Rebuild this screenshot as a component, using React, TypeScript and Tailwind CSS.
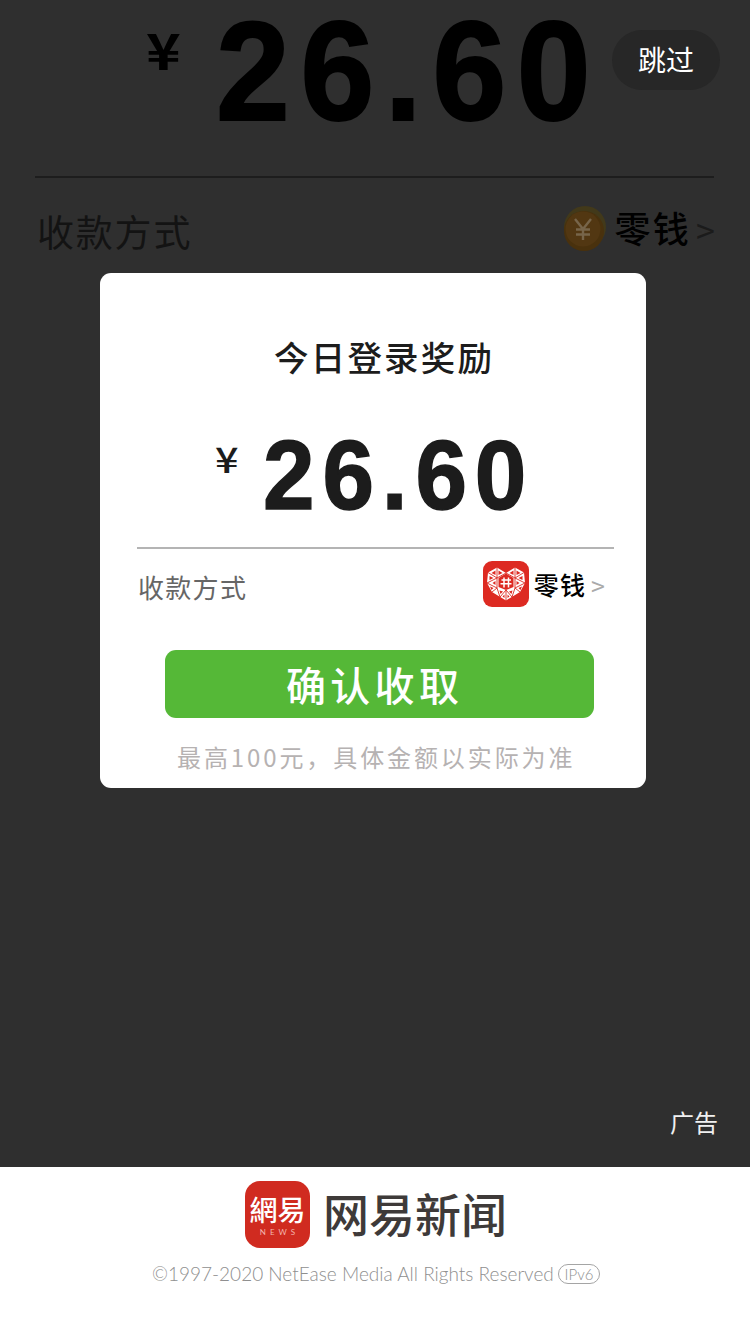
type rowProps = {
  big?: boolean;
};

const cjk = "font-['Noto_Sans_CJK_SC',sans-serif]";

const Coin = () => (
  <svg className="w-[44px] h-[48px]" viewBox="0 0 44 48">
    <circle cx="23" cy="22" r="21" fill="#42391a" />
    <circle cx="22" cy="26" r="20" fill="#49310d" />
    <circle cx="21" cy="24" r="17.5" fill="#523712" />
    <path
      d="M13 14L21 24L29 14M21 24V35M14 24.500H28M14 29.500H28"
      fill="none"
      stroke="#77654a"
      strokeWidth="2.4"
    />
  </svg>
);

const Heart = () => (
  <svg className="w-[46px] h-[46px]" viewBox="0 0 46 46">
    <rect width="46" height="46" rx="9" fill="#dd2a22" />
    <path
      d="M14 6.500L23 12L32 6.500L41 11.500L42 22L37 31L23 39.500L9 31L4 22L5 11.500Z"
      fill="#fff"
    />
    {/* gaps between the tiles */}
    <g fill="none" stroke="#dd2a22" strokeWidth="0.9">
      <path d="M14 6V17M5 11.500L14 17L23 12L32 17L41 11.500M32 6V17" />
      <path d="M14 17L4 22L14 27M32 17L42 22L32 27M14 17V27M32 17V27" />
      <path d="M14 27L9 31M32 27L37 31M14 27L17 36L23 29L29 36L32 27M23 29V40" />
    </g>
    <g fill="#dd2a22">
      <path d="M8.500 12L12.500 9.500V14ZM15.500 9.500L19.500 12L15.500 14ZM30.500 9.500L26.500 12L30.500 14ZM37.500 12L33.500 9.500V14Z" />
      <path d="M6.500 15L10.500 17L6.500 19ZM39.500 15L35.500 17L39.500 19ZM9.500 22L12.500 20V24ZM36.500 22L33.500 20V24Z" />
      <path d="M7 25.500L10.500 27L8.500 29ZM39 25.500L35.500 27L37.500 29ZM16.500 29.500L20 30.500L17.500 33ZM29.500 29.500L26 30.500L28.500 33Z" />
      <path d="M21.500 33.500V37L19.500 35.500ZM24.500 33.500V37L26.500 35.500Z" />
      <path d="M15.500 17L23 12.500L30.500 17V26L23 29L15.500 26Z" />
    </g>
    <path
      d="M18.500 19H28M17.500 22.800H28.500M21 16.500V26.500M25.500 16.500V26.500"
      fill="none"
      stroke="#fff"
      strokeWidth="1.500"
    />
  </svg>
);

const Amount = ({ big }: rowProps) => (
  <div
    className={`flex items-start whitespace-nowrap ${
      big ? "text-black" : "text-[#1c1c1c]"
    }`}
  >
    <span
      className={`${cjk} origin-left scale-x-[1.18] ${
        big
          ? "w-[70px] mt-[22px] text-[50px] leading-[52px] font-bold"
          : "w-[48px] mt-[17px] text-[35px] leading-[32px] font-medium"
      }`}
    >
      ¥
    </span>
    <span
      className={`font-['Liberation_Sans',Arial,sans-serif] font-bold origin-left scale-x-[0.94] ${
        big
          ? "mb-[2px] text-[141px] leading-[142px] tracking-[11.4px] [-webkit-text-stroke:2px_#000]"
          : "text-[98.5px] leading-[100px] tracking-[8.4px] [-webkit-text-stroke:1.5px_#1c1c1c]"
      }`}
    >
      26.60
    </span>
  </div>
);

const Background = () => (
  <div className="h-full bg-[#2f2f2f]">
    <div className="pl-[146px]">
      <Amount big />
    </div>
    <div className="mt-[32px] ml-[35px] w-[679px] h-[2px] bg-[#1d1d1d]" />
    <div className="flex justify-between pl-[37px] pr-[34px]">
      <span className="mt-[33px] text-[37px] leading-[40px] tracking-[1.800px] text-[#131313]">
        收款方式
      </span>
      <div className="flex pt-[27px]">
        <Coin />
        <span className="ml-[8px] mt-[2px] text-[36px] leading-[40px] tracking-[2.300px] font-medium text-black">
          零钱
        </span>
        <span className="ml-[5px] mt-[5px] w-[20px] text-[34px] leading-[40px] text-[#1b1b1b]">
          &gt;
        </span>
      </div>
    </div>
  </div>
);

const Reward = () => (
  <div className="mt-[273px] ml-[100px] w-[546px] h-[515px] bg-white rounded-[11px] overflow-hidden">
    <h1 className="pt-[63px] pl-[174px] text-[34.5px] leading-[40px] tracking-[2.200px] font-medium text-[#1c1c1c]">
      今日登录奖励
    </h1>
    <div className="mt-[49px] ml-[115px]">
      <Amount />
    </div>
    <div className="mt-[22px] ml-[37px] w-[477px] h-[2px] bg-[#b4b4b4]" />
    <div className="flex items-start justify-between h-[101px] pl-[38px] pr-[41px]">
      <span className="mt-[23px] text-[26px] leading-[30px] tracking-[1.300px] text-[#666]">
        收款方式
      </span>
      <div className="flex pt-[12px]">
        <Heart />
        <span className="ml-[5px] mt-[7px] text-[25px] leading-[32px] tracking-[1.100px] font-medium text-black">
          零钱
        </span>
        <span className="ml-[5px] mt-[9px] w-[14px] text-[25px] leading-[30px] text-[#aaa]">
          &gt;
        </span>
      </div>
    </div>
    <button className="block ml-[65px] w-[429px] h-[68px] rounded-[11px] bg-[#55b837] pl-[121px] text-left text-[40px] leading-[68px] tracking-[4.300px] font-medium text-white">
      确认收取
    </button>
    <p className="mt-[24px] pl-[77px] text-[24px] leading-[30px] tracking-[2.900px] whitespace-nowrap text-[#b6b2b2]">
      最高100元，具体金额以实际为准
    </p>
  </div>
);

const Footer = () => (
  <footer className="h-[167px] bg-white">
    <div className="flex pt-[14px] pl-[245px]">
      <div className="w-[65px] h-[67px] rounded-[15px] bg-[#d02b20] text-white text-center">
        <div className="pt-[13px] font-['Noto_Sans_CJK_TC',sans-serif] text-[28px] leading-[30px] font-medium">
          網易
        </div>
        <div className="mt-[4px] pl-[4px] font-['Lato',sans-serif] text-[8px] leading-[8px] tracking-[4px] text-[#f3b5af]">
          NEWS
        </div>
      </div>
      <span className="ml-[13px] text-[46px] leading-[62px] font-medium text-[#3e3a39]">
        网易新闻
      </span>
    </div>
    <div className="flex items-center mt-[15px] pl-[152px] font-['Lato',sans-serif] font-light text-[#8f8f8f] whitespace-nowrap">
      <span className="w-[406px] text-[19px] leading-[22px]">
        ©1997-2020 NetEase Media All Rights Reserved
      </span>
      <span className="w-[42px] h-[20px] border border-[#a5a5a5] rounded-full text-center text-[15px] leading-[18px]">
        IPv6
      </span>
    </div>
  </footer>
);

const App = () => {
  return (
    <div className={`w-[750px] h-[1334px] overflow-hidden ${cjk}`}>
      <div className="relative h-[1167px]">
        <Background />
        <div className="absolute inset-0">
          <Reward />
        </div>
        <button className="absolute top-[30px] right-[30px] w-[108px] h-[60px] rounded-full bg-[#272727] pb-[2px] text-[28px] leading-[56px] text-white">
          跳过
        </button>
        <span className="absolute right-[32px] bottom-[30px] text-[24px] leading-[30px] text-[#f0f0f0]">
          广告
        </span>
      </div>
      <Footer />
    </div>
  );
};
export default App;
